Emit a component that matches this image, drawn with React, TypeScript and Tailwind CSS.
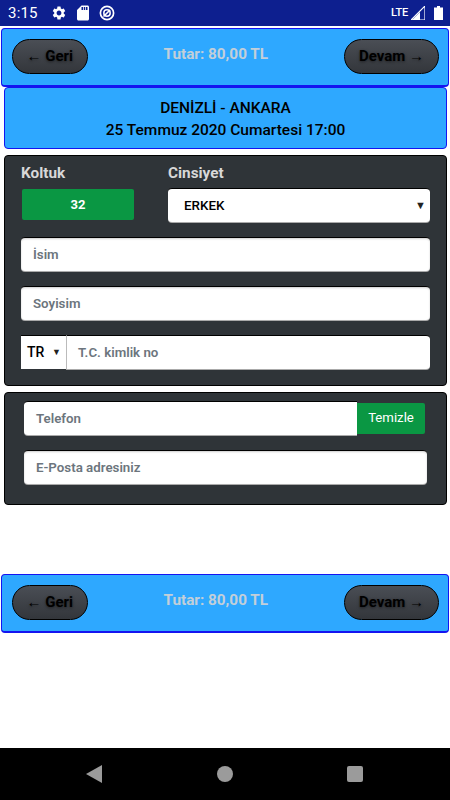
import { MdSdStorage, MdSettings } from 'react-icons/md'

const inputClass =
  'h-[34px] w-full rounded-[4px] border-t border-t-black bg-white px-3 text-[13.3px] font-semibold text-[#6c757d] shadow-[inset_0_1px_2px_rgba(0,0,0,0.2),0_1px_0_#aaa] flex items-center'

function NavButton({ label, back }: { label: string; back?: boolean }) {
  return (
    <div
      className={
        back
          ? 'flex h-[35px] items-center justify-center rounded-[18px] border border-black bg-gradient-to-b from-[#4a4e55] to-[#33363b] px-[13.5px] text-[15px] font-bold text-black [text-shadow:0_1px_3px_rgba(0,0,0,0.5)]'
          : 'flex h-[35px] items-center justify-center rounded-[18px] border border-black bg-gradient-to-b from-[#4a4e55] to-[#33363b] px-[14px] text-[15px] font-bold text-black [text-shadow:0_1px_3px_rgba(0,0,0,0.5)]'
      }
    >
      {back ? `← ${label}` : `${label} →`}
    </div>
  )
}

function PriceBar() {
  return (
    <div className="mx-px flex h-[59px] items-center justify-between rounded-[4px] border border-b-2 border-[#1414f0] bg-[#2ea8ff] pb-[2px] pl-[10px] pr-[9px]">
      <NavButton label="Geri" back />
      <span className="mb-[3px] text-[15.3px] font-bold text-[#c3cfd9]">Tutar: 80,00 TL</span>
      <NavButton label="Devam" />
    </div>
  )
}

export default function App() {
  return (
    <div className="flex h-[800px] w-[450px] flex-col overflow-hidden bg-white font-['Roboto',sans-serif]">
      {/* status bar */}
      <div className="flex h-[26px] shrink-0 items-center justify-between bg-[#0d1f8f] pl-2 pr-[7px] text-white">
        <div className="flex items-center gap-[11px]">
          <span className="text-[15px] tracking-[0.2px]">3:15</span>
          <MdSettings size={16} className="ml-[2px]" />
          <MdSdStorage size={18} className="ml-[-4px]" />
          <svg width="16" height="16" viewBox="0 0 16 16" className="ml-[-4px]">
            <circle cx="8" cy="8" r="6.6" fill="none" stroke="white" strokeWidth="1.7" />
            <circle cx="8" cy="8" r="3.2" fill="none" stroke="white" strokeWidth="1.5" />
            <path d="M4.5 11.5 11 5" stroke="white" strokeWidth="1.6" />
          </svg>
        </div>
        <div className="flex items-center gap-[2px]">
          <span className="text-[11px] font-medium tracking-[-0.2px]">LTE</span>
          <svg width="14" height="14" viewBox="0 0 14 14" className="ml-[1px]">
            <path d="M14 0v14H0z" fill="none" stroke="white" strokeWidth="1.2" />
            <path d="M9 6v8H1l8-8z" fill="white" />
          </svg>
          <svg width="9" height="14" viewBox="0 0 9 14" className="ml-[7px]">
            <path d="M3 0h3v1.5h3V14H0V1.5h3z" fill="white" />
          </svg>
        </div>
      </div>

      <div className="mt-[2px]">
        <PriceBar />
      </div>

      {/* route */}
      <div className="ml-1 mr-[3px] flex h-[62px] flex-col items-center justify-center gap-[1px] rounded-[4px] border border-[#1414f0] bg-[#2ea8ff] pt-[3px] text-[15.5px] font-medium leading-[21px] text-black">
        <span>DENİZLİ - ANKARA</span>
        <span>25 Temmuz 2020 Cumartesi 17:00</span>
      </div>

      {/* passenger */}
      <div className="ml-1 mr-[3px] mt-[6px] h-[231px] rounded-[4px] border border-black bg-[#2f3438] pl-4 pr-4 pt-[7px]">
        <div className="flex gap-[34px]">
          <div className="w-[113px]">
            <div className="text-[15.3px] font-bold leading-[20px] text-[#d8d8d8]">Koltuk</div>
            <div className="ml-px mt-[6px] flex h-[31px] items-center justify-center rounded-[2px] bg-[#0a9743] pt-px text-[13px] font-bold text-white">
              32
            </div>
          </div>
          <div className="flex-1">
            <div className="text-[15.3px] font-bold leading-[20px] text-[#d8d8d8]">Cinsiyet</div>
            <div className="mt-[5px] flex h-[34px] items-center justify-between rounded-[4px] border-t border-t-black bg-white pl-4 pr-[4px] pt-px text-[13.4px] font-medium text-black shadow-[0_1px_0_#aaa]">
              ERKEK
              <span className="text-[11px] text-[#222]">▼</span>
            </div>
          </div>
        </div>
        <div className="mt-[15px] flex flex-col gap-[15px]">
          <div className={inputClass}>İsim</div>
          <div className={inputClass}>Soyisim</div>
          <div className="flex h-[34px]">
            <div className="flex w-[45px] shrink-0 items-center justify-between border-t border-t-black bg-white pl-[6px] pr-[5px] text-[14px] font-medium text-black">
              TR
              <span className="text-[9px] text-[#222]">▼</span>
            </div>
            <div className="flex flex-1 items-center rounded-r-[4px] border-l border-l-[#bbb] border-t border-t-black bg-white pl-[11px] text-[13.3px] font-semibold text-[#6c757d] shadow-[0_1px_0_#aaa]">
              T.C. kimlik no
            </div>
          </div>
        </div>
      </div>

      {/* contact */}
      <div className="ml-1 mr-[3px] mt-[6px] h-[113px] rounded-[4px] border border-black bg-[#2f3438] pl-[19px] pr-[19px] pt-[8px]">
        <div className="flex h-[34px] items-center">
          <div className="flex h-[34px] flex-1 items-center rounded-l-[4px] border-t border-t-black bg-white pl-3 text-[13.3px] font-semibold text-[#6c757d] shadow-[0_1px_0_#aaa]">
            Telefon
          </div>
          <div className="mr-[2px] flex h-[31px] w-[68px] items-center justify-center rounded-r-[2px] bg-[#0a9743] text-[13.2px] text-white">
            Temizle
          </div>
        </div>
        <div className="mt-[15px]">
          <div className={inputClass}>E-Posta adresiniz</div>
        </div>
      </div>

      <div className="mt-[69px]">
        <PriceBar />
      </div>

      {/* android nav */}
      <div className="mt-auto flex h-[52px] shrink-0 items-center justify-between bg-black pl-[86px] pr-[87px] pb-[1px]">
        <svg width="16" height="18" viewBox="0 0 16 18">
          <path d="M16 0v18L0 9z" fill="#9b9b9b" />
        </svg>
        <div className="h-4 w-4 rounded-full bg-[#9b9b9b]" />
        <div className="h-4 w-4 rounded-[2px] bg-[#9b9b9b]" />
      </div>
    </div>
  )
}
